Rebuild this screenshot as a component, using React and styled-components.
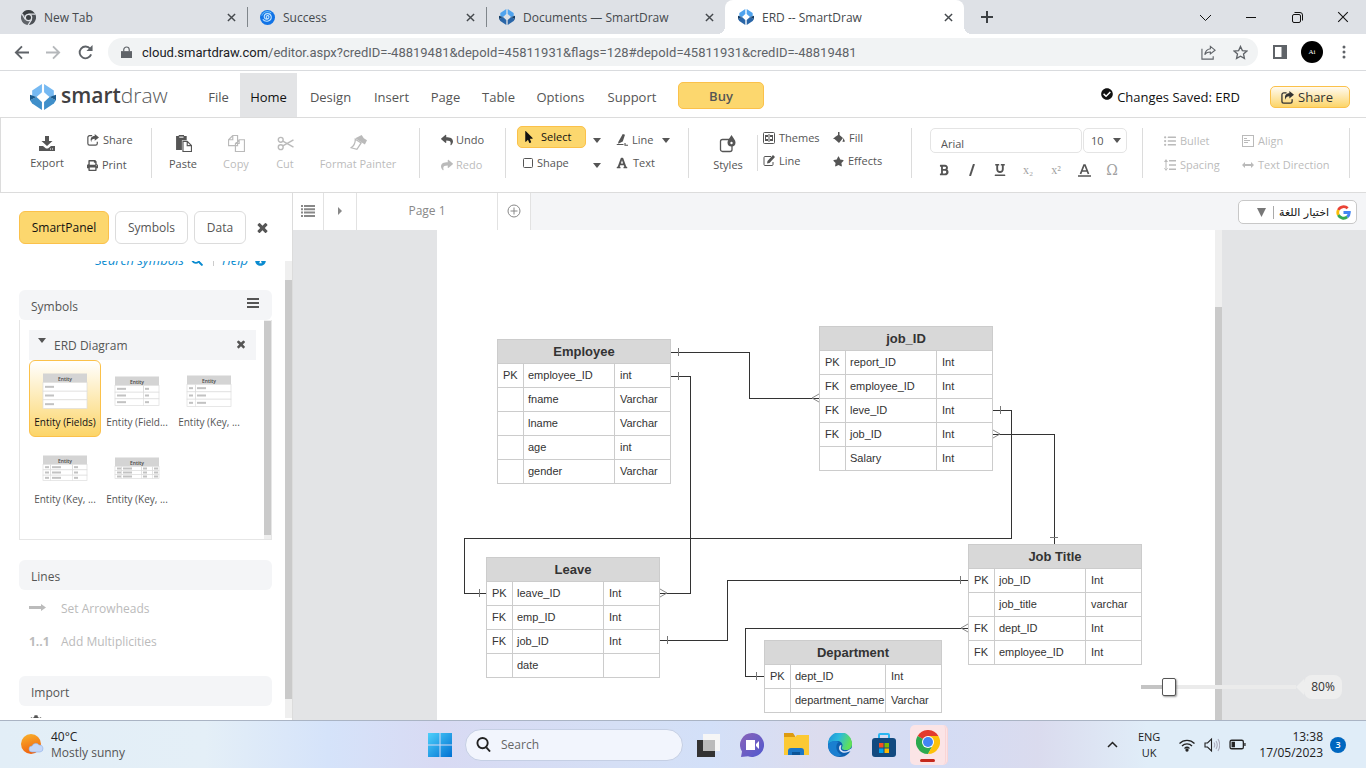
import React from "react";
import styled, { createGlobalStyle } from "styled-components";
import {
  FaReply, FaShare, FaPrint, FaStar, FaListUl, FaSearch, FaInfoCircle, FaMousePointer,
  FaFont, FaBold, FaUnderline, FaCheckCircle, FaCog,
} from "react-icons/fa";

const GlobalStyle = createGlobalStyle`
  *, *::before, *::after { box-sizing: border-box; }
  body {
    margin: 0;
    font-family: "Open Sans", "Noto Sans", sans-serif;
    font-size: 12px;
    color: #555;
    background: #fff;
    overflow: hidden;
  }
  button, input, select { font: inherit; color: inherit; }
  button { border: 0; padding: 0; margin: 0; background: none; cursor: pointer; }
  a { color: inherit; text-decoration: none; }
  svg { display: block; flex: none; }
`;

/* ---------- shell ---------- */

const Shell = styled.div`
  display: flex;
  flex-direction: column;
  height: 100vh;
`;

const Row = styled.div`
  display: flex;
  align-items: center;
  gap: ${(p) => p.$gap || 0}px;
`;

const Spacer = styled.div`
  flex: 1;
`;

/* ---------- icons ---------- */

const Svg = ({ size = 16, w, h, box = 16, children, ...rest }) => (
  <svg width={w || size} height={h || size} viewBox={`0 0 ${box} ${box}`} fill="currentColor" aria-hidden="true" {...rest}>
    {children}
  </svg>
);

const Line = ({ children, sw = 1, ...rest }) => (
  <Svg fill="none" stroke="currentColor" strokeWidth={sw} {...rest}>{children}</Svg>
);

const CrossIcon = ({ size = 10, sw = 2 }) => (
  <Line size={size} box={10} sw={sw}><path d="M1 1L9 9M9 1L1 9" /></Line>
);

const HeavyCross = ({ size }) => (
  <Svg size={size} box={1792}>
    <path d="M1490 1322q0 40-28 68l-136 136q-28 28-68 28t-68-28l-294-294-294 294q-28 28-68 28t-68-28l-136-136q-28-28-28-68t28-68l294-294-294-294q-28-28-28-68t28-68l136-136q28-28 68-28t68 28l294 294 294-294q28-28 68-28t68 28l136 136q28 28 28 68t-28 68l-294 294 294 294q28 28 28 68z" />
  </Svg>
);

const Caret = ({ w = 8, h = 5 }) => (
  <svg width={w} height={h} viewBox="0 0 8 5" preserveAspectRatio="none" fill="currentColor" aria-hidden="true"><path d="M0 0h8L4 5z" /></svg>
);

const ShareIcon = ({ size = 13 }) => (
  <Svg size={size} box={14}>
    <path d="M6 2H3a2 2 0 0 0-2 2v7a2 2 0 0 0 2 2h7a2 2 0 0 0 2-2V9" fill="none" stroke="currentColor" strokeWidth="1.4" />
    <path d="M9 0l5 4-5 4V5.600C6.500 5.600 5 6.500 5 9.500 3 5 5.500 2.400 9 2.400z" />
  </Svg>
);

const ExportIcon = () => (
  <Svg size={16}>
    <path d="M6 1h4v5h3.500L8 11 2.500 6H6zM0 11h4l3 2.500h2L12 11h4v5H0z" />
    <path d="M11 14h1M13 14h1" stroke="#fff" />
  </Svg>
);

const PasteIcon = () => (
  <Svg w={17} h={17}>
    <path d="M1 1h2.500V0h5v1H11v4H6.500v9H1z" />
    <path d="M4 2h4" stroke="#fff" />
    <path d="M7.500 6h4l4 4v5.500h-8zM11.500 6v4h4" fill="#fff" stroke="currentColor" strokeWidth="1.100" />
  </Svg>
);

const CopyIcon = () => (
  <Line w={17} h={17} sw={1.1}>
    <path d="M4.500 .5H9v9.500H.5V4.500zM4.500 .5v4h-4M10.500 4.500h5v11H7V8zM10.500 4.500V8H7" />
  </Line>
);

const CutIcon = () => (
  <Line w={17} h={17} sw={1.3}>
    <circle cx="3.500" cy="4.500" r="2.300" /><circle cx="3.500" cy="11.500" r="2.300" />
    <path d="M5.500 5.700L15.500 11.500M5.500 10.300L15.500 4.500" />
  </Line>
);

const PainterIcon = () => (
  <Svg w={17} h={17}>
    <path d="M5 3l6-3 2 3 3 2-2 4-3-2z" />
    <path d="M5 4l5.500 3.500-4 6L1 12c3-2 4-5 4-8z" fill="none" stroke="currentColor" strokeWidth="1.200" />
  </Svg>
);

const PenIcon = () => (
  <Svg size={12}>
    <path d="M9 0l3 1-3 9-6 3 0-2.500z" />
    <path d="M1 14h9M12 12v3h4" stroke="currentColor" strokeWidth="1.500" fill="none" />
  </Svg>
);

const StylesIcon = () => (
  <Svg size={18} box={18}>
    <rect x="1.500" y="4.500" width="11.500" height="12" rx="2" fill="none" stroke="currentColor" strokeWidth="1.300" />
    <path d="M12.500 0c2 3.500 4 5 4 7.500a4 4 0 0 1-8 0C8.500 5 10.500 3.500 12.500 0z" />
    <circle cx="12.500" cy="8" r="1.200" fill="#fff" />
  </Svg>
);

const ThemesIcon = () => (
  <Svg size={12} box={12}>
    <rect x=".5" y=".5" width="11" height="11" rx="1" fill="none" stroke="currentColor" />
    <path d="M2 3h3v2H3v2h2v2H2zM10 3H7v2h2v2H7v2h3zM5.500 2h1v8h-1z" />
  </Svg>
);

const FillIcon = () => (
  <Svg size={12} box={12}>
    <path d="M5 0h1.500v3L10 6 6 11 1.500 7 0 7l2-2 3-2zM10.500 6L12 9.500 9.500 10z" />
  </Svg>
);

const EditIcon = () => (
  <Svg size={12} box={12}>
    <path d="M8 1.500H2a1 1 0 0 0-1 1v7a1 1 0 0 0 1 1h7a1 1 0 0 0 1-1V7" fill="none" stroke="currentColor" />
    <path d="M10 0l2 2-5.500 6-2.500.5.5-2.500z" />
  </Svg>
);

const SpacingIcon = () => (
  <Svg size={12} box={12}>
    <path d="M2 0l2 3H0zM2 12l2-3H0zM1.500 2h1v8h-1zM5 1h7v1.500H5zM5 5.200h7v1.500H5zM5 9.500h7V11H5z" />
  </Svg>
);

const AlignIcon = () => (
  <Line size={12} box={12}><rect x=".5" y=".5" width="11" height="11" /><path d="M2 3.500h3M2 5.500h6M2 7.500h4" /></Line>
);

const DirectionIcon = () => (
  <Svg size={12} box={12}><path d="M0 6l3-3v2h6V3l3 3-3 3V7H3v2z" /></Svg>
);

const PageListIcon = () => (
  <Svg size={14} box={14}>
    <path d="M0 1h2v2H0zM3 1h11v2H3zM0 4.300h2v2H0zM3 4.300h11v2H3zM0 7.600h2v2H0zM3 7.600h11v2H3zM0 11h2v2H0zM3 11h11v2H3z" />
  </Svg>
);

const LogoMark = ({ size, a = "#76b9f2", b = "#3f8fca", c = "#1b5a8c" }) => (
  <Svg size={size} box={24}>
    <path d="M11 0L2 6v5l4 1 5-4.500z" fill={a} />
    <path d="M13 0l9 6v5l-4 1-5-4.500z" fill={a} />
    <path d="M0 15l6-3 5 4.500V24L2 18z" fill={b} />
    <path d="M24 15l-6-3-5 4.500V24l9-6z" fill={b} />
    <path d="M0 10v5l6-3zM24 10v5l-6-3z" fill={c} />
  </Svg>
);

const ChromeIcon = ({ size, mono }) => {
  const [r, y, g, m] = mono ? ["#3c4043", "#4d5156", "#5f6368", "#3c4043"] : ["#e33b2e", "#fdc10a", "#2da94f", "#4285f4"];
  return (
    <Svg size={size} box={24}>
      <path d="M12 12L1.600 6A12 12 0 0 1 22.400 6z" fill={r} />
      <path d="M12 12L1.600 6A12 12 0 0 0 12 24l5-9z" fill={g} />
      <path d="M12 12l5 3-5 9A12 12 0 0 0 22.400 6H12z" fill={y} />
      {mono && <path d="M12 6.500h11M7 15L1.500 6M17 15l-5.500 9" stroke="#dee1e6" strokeWidth="2" />}
      <circle cx="12" cy="12" r="6" fill={mono ? "#dee1e6" : "#fff"} />
      <circle cx="12" cy="12" r={mono ? 4 : 5} fill={m} />
    </Svg>
  );
};

const SwirlIcon = () => (
  <Svg size={15} box={16}>
    <circle cx="8" cy="8" r="8" fill="#1173e6" />
    <path d="M8 9a1.500 1.500 0 1 1 1.500-2C10 10 5 11 4.500 7.500 4.500 3 11 2.500 12 7c.5 5-6 6.500-9 3" stroke="#bfe3ff" strokeWidth="1.200" fill="none" />
    <path d="M2 6C3 2 8 .500 12 3" stroke="#7ed0ff" fill="none" />
  </Svg>
);

/* ---------- browser chrome ---------- */

const TabStrip = styled.div`
  display: flex;
  height: 34px;
  padding-left: 8px;
  background: #dee1e6;
  flex: none;
`;

const BrowserTab = styled.div`
  position: relative;
  display: flex;
  align-items: center;
  gap: 8px;
  flex: 0 1 239px;
  padding: 0 11px 0 13px;
  color: #45494d;
  background: ${(p) => (p.$active ? "#fff" : "transparent")};
  border-radius: 8px 8px 0 0;
  &::before, &::after {
    content: ${(p) => (p.$active ? '""' : "none")};
    position: absolute;
    bottom: 0;
    width: 8px;
    height: 8px;
  }
  &::before { left: -8px; background: radial-gradient(circle at 0 0, #dee1e6 8px, #fff 8px); }
  &::after { right: -8px; background: radial-gradient(circle at 100% 0, #dee1e6 8px, #fff 8px); }
`;

const TabTitle = styled.span`
  flex: 1;
  white-space: nowrap;
`;

const TabDivider = styled.div`
  width: 1px;
  height: 20px;
  margin: 7px -1px 0 0;
  background: #80868b;
`;

const IconButton = styled.button`
  display: flex;
  align-items: center;
  justify-content: center;
  width: ${(p) => p.$w || 32}px;
  height: ${(p) => p.$h || 28}px;
  color: ${(p) => p.$color || "inherit"};
`;

const AddressBar = styled.div`
  display: flex;
  align-items: center;
  height: 37px;
  padding: 0 6px 0 5px;
  border-bottom: 1px solid #d9dbde;
  color: #5f6368;
  flex: none;
`;

const Omnibox = styled.div`
  display: flex;
  align-items: center;
  flex: 1;
  height: 28px;
  margin: 0 6px 0 7px;
  padding: 0 2px 0 13px;
  border-radius: 14px;
  background: #f1f3f4;
`;

const Url = styled.span`
  flex: 1;
  margin-left: 10px;
  font-family: Roboto, "Open Sans", sans-serif;
  font-size: 13px;
  white-space: nowrap;
  b { font-weight: 400; color: #202124; }
`;

const Avatar = styled.span`
  display: grid;
  place-items: center;
  width: 22px;
  height: 22px;
  border-radius: 50%;
  background: #000;
  color: #fff;
  font: 7px "Liberation Serif", serif;
`;

const tabs = [
  { title: "New Tab", icon: <ChromeIcon size={15} mono /> },
  { title: "Success", icon: <SwirlIcon /> },
  { title: "Documents — SmartDraw", icon: <LogoMark size={16} a="#4fa3ee" b="#2a66a8" c="#123c66" /> },
  { title: "ERD -- SmartDraw", icon: <LogoMark size={16} a="#4fa3ee" b="#2a66a8" c="#123c66" />, active: true },
];

const Browser = () => (
  <header>
    <TabStrip>
      {tabs.map((t, i) => (
        <React.Fragment key={t.title}>
          <BrowserTab $active={t.active}>
            {t.icon}
            <TabTitle>{t.title}</TabTitle>
            <IconButton $w={10} aria-label="Close tab"><CrossIcon size={9} sw={1.6} /></IconButton>
          </BrowserTab>
          {i < 2 && <TabDivider />}
        </React.Fragment>
      ))}
      <IconButton $w={46} $h={34} $color="#3c4043" aria-label="New tab"><Line size={12} box={12} sw={2}><path d="M6 0v12M0 6h12" /></Line></IconButton>
      <Spacer />
      <Row as="nav" aria-label="Window">
        <IconButton $w={46} $color="#111" aria-label="Tab search"><Line size={11} box={11}><path d="M0 3l5.500 5.500L11 3" /></Line></IconButton>
        <IconButton $w={46} $color="#111" aria-label="Minimise"><Line size={10} box={10}><path d="M0 5.500h10" /></Line></IconButton>
        <IconButton $w={46} $color="#111" aria-label="Restore"><Line size={11} box={11}><rect x=".5" y="2.500" width="8" height="8" rx="1.500" /><path d="M2.500 .5H8a2.500 2.500 0 0 1 2.500 2.500v5.500" /></Line></IconButton>
        <IconButton $w={46} $color="#111" aria-label="Close"><CrossIcon size={12} sw={0.9} /></IconButton>
      </Row>
    </TabStrip>
    <AddressBar>
      <IconButton aria-label="Back"><Line size={15} sw={2}><path d="M16 8H2M8.500 1.500L2 8l6.500 6.500" /></Line></IconButton>
      <IconButton $color="#b5b8bb" aria-label="Forward"><Line size={15} sw={2}><path d="M0 8h14M7.500 1.500L14 8l-6.500 6.500" /></Line></IconButton>
      <IconButton aria-label="Reload"><Line size={15} sw={2}><path d="M14 10A6.300 6.300 0 1 1 13 4" /><path d="M15.500 0v6.500H9z" fill="currentColor" stroke="none" /></Line></IconButton>
      <Omnibox>
        <Svg w={11} h={13} box={12}><path d="M0 4.500h12V12H0z" /><path d="M3 5V3a3 3 0 0 1 6 0v2" fill="none" stroke="currentColor" strokeWidth="1.300" /></Svg>
        <Url><b>cloud.smartdraw.com</b>/editor.aspx?credID=-48819481&amp;depoId=45811931&amp;flags=128#depoId=45811931&amp;credID=-48819481</Url>
        <IconButton aria-label="Share page"><Line size={15} sw={1.2}><path d="M1 4v11h12v-3M10 1.500l5 4-5 4V7.500c-3 0-5 1-6 3 .5-4 2.500-6 6-6.500z" /></Line></IconButton>
        <IconButton aria-label="Bookmark"><Line size={15} sw={1.4}><path d="M8 1.500l2 4.400 4.800.5-3.600 3.200 1 4.700L8 11.900l-4.200 2.400 1-4.700L1.200 6.400 6 5.900z" /></Line></IconButton>
      </Omnibox>
      <IconButton aria-label="Side panel"><Svg size={14} box={14}><path d="M0 0h14v14H0zM2 2v10h6.500V2z" fillRule="evenodd" /></Svg></IconButton>
      <IconButton aria-label="Profile"><Avatar>Ai</Avatar></IconButton>
      <IconButton aria-label="More"><Svg size={14} box={14}><circle cx="7" cy="2" r="1.500" /><circle cx="7" cy="7" r="1.500" /><circle cx="7" cy="12" r="1.500" /></Svg></IconButton>
    </AddressBar>
  </header>
);

/* ---------- application menu ---------- */

const MenuBar = styled.header`
  display: flex;
  align-items: flex-end;
  height: 47px;
  padding: 0 16px 0 30px;
  border-bottom: 1px solid #dcdcdc;
  font-size: 13px;
  flex: none;
`;

const Brand = styled.a`
  display: flex;
  align-items: center;
  gap: 5px;
  width: 167px;
  height: 44px;
  padding-top: 4px;
  font-size: 21px;
  font-weight: 300;
  line-height: 28px;
  color: #58595b;
  span { padding-bottom: 5px; }
  b { font-weight: 600; color: #414042; }
`;

const MenuItem = styled.button`
  height: 44px;
  width: ${(p) => p.$w}px;
  padding-top: 3px;
  color: ${(p) => (p.$active ? "#111" : "#555")};
  background: ${(p) => (p.$active ? "#e3e4e6" : "none")};
`;

const BuyButton = styled.button`
  width: 86px;
  height: 27px;
  margin: 0 0 8px 10px;
  border: 1px solid #fbc14a;
  border-radius: 5px;
  background: #fcd76e;
  font-weight: 600;
`;

const SavedNote = styled.div`
  display: flex;
  gap: 4px;
  height: 33px;
  margin-right: 30px;
  line-height: 26px;
  color: #111;
  svg { margin-top: 4px; }
`;

const ShareButton = styled.button`
  display: flex;
  align-items: center;
  justify-content: center;
  gap: 4px;
  width: 80px;
  height: 22px;
  margin-bottom: 9px;
  padding-right: 6px;
  border: 1px solid #fbc14a;
  border-radius: 5px;
  background: linear-gradient(#fffaf0, #fcd569);
  color: #333;
`;

const menu = [["File", 43], ["Home", 57], ["Design", 67], ["Insert", 55], ["Page", 53], ["Table", 53], ["Options", 71], ["Support", 72]];

const Menu = () => (
  <MenuBar>
    <Brand href="#home"><LogoMark size={26} /><span><b>smart</b>draw</span></Brand>
    {menu.map(([name, w]) => <MenuItem key={name} $w={w} $active={name === "Home"}>{name}</MenuItem>)}
    <BuyButton>Buy</BuyButton>
    <Spacer />
    <SavedNote><FaCheckCircle size={12} />Changes Saved: ERD</SavedNote>
    <ShareButton><ShareIcon size={13} />Share</ShareButton>
  </MenuBar>
);

/* ---------- ribbon ---------- */

const Ribbon = styled.div`
  display: flex;
  height: 75px;
  padding-top: 10px;
  border-bottom: 1px solid #dcdcdc;
  border-left: 1px solid #dcdcdc;
  font-size: 11px;
  line-height: 16px;
  flex: none;
`;

const Group = styled.div`
  display: flex;
  width: ${(p) => p.$w}px;
  height: 50px;
  padding-left: ${(p) => p.$pad}px;
  border-right: 1px solid #dcdcdc;
  flex: none;
`;

const BigTool = styled.button`
  display: flex;
  flex-direction: column;
  align-items: center;
  gap: 4px;
  width: ${(p) => p.$w}px;
  padding-top: 7px;
  white-space: nowrap;
  opacity: ${(p) => (p.disabled ? 0.4 : 1)};
`;

const Stack = styled.div`
  display: flex;
  flex-direction: column;
  gap: ${(p) => p.$gap}px;
  width: ${(p) => p.$w}px;
  padding-top: 4px;
  padding-left: ${(p) => p.$left || 0}px;
  flex: none;
`;

const Tool = styled.button`
  display: flex;
  align-items: center;
  gap: ${(p) => p.$gap || 4}px;
  height: 16px;
  padding-left: ${(p) => p.$pad || 0}px;
  white-space: nowrap;
  opacity: ${(p) => (p.disabled ? 0.4 : 1)};
`;

const SelectTool = styled.button`
  display: flex;
  align-items: center;
  gap: 6px;
  width: 69px;
  height: 22px;
  margin-top: -6px;
  padding-left: 5px;
  border: 1px solid #fbc14a;
  border-radius: 5px;
  background: #fcd76e;
  color: #111;
`;

const CaretButton = styled.button`
  display: grid;
  place-items: center;
  width: 22px;
  height: 16px;
`;

const StyleTools = styled.div`
  display: grid;
  grid-template-columns: 70px 60px;
  row-gap: 7px;
  align-content: start;
  height: 36px;
  margin-top: 7px;
  padding-left: 5px;
  border-left: 1px solid #dcdcdc;
  button { margin-top: -5px; margin-bottom: 5px; }
`;

const FontField = styled.input`
  width: 152px;
  height: 25px;
  padding: 5px 10px 0;
  border: 1px solid #e4e4e4;
  border-radius: 5px;
`;

const SizeField = styled.label`
  display: flex;
  align-items: center;
  width: 44px;
  height: 25px;
  padding: 0 5px 0 7px;
  border: 1px solid #e4e4e4;
  border-radius: 5px;
  select { appearance: none; flex: 1; min-width: 0; border: 0; padding: 0; background: none; }
`;

const FontTools = styled.div`
  display: flex;
  flex-direction: column;
  gap: 8px;
`;

const Glyph = styled.button`
  display: grid;
  place-items: center;
  width: 28px;
  height: 18px;
  font: ${(p) => p.$font || '13px "Liberation Sans", sans-serif'};
  opacity: ${(p) => (p.$dim ? 0.55 : 1)};
`;

const TextTools = styled.div`
  display: grid;
  grid-template-columns: 78px 100px;
  row-gap: 8px;
  align-content: start;
  padding-top: 5px;
`;

const RibbonBar = () => (
  <Ribbon>
    <Group $w={151} $pad={22}>
      <BigTool $w={48}><ExportIcon />Export</BigTool>
      <Stack $gap={9} $w={74} $left={16}>
        <Tool $gap={4}><ShareIcon size={12} />Share</Tool>
        <Tool $gap={4}><FaPrint size={11} />Print</Tool>
      </Stack>
    </Group>
    <Group $w={268} $pad={6}>
      <BigTool $w={50}><PasteIcon />Paste</BigTool>
      <BigTool $w={56} disabled><CopyIcon />Copy</BigTool>
      <BigTool $w={42} disabled><CutIcon />Cut</BigTool>
      <BigTool $w={104} disabled><PainterIcon />Format Painter</BigTool>
    </Group>
    <Group $w={86} $pad={21}>
      <Stack $gap={9} $w={60}>
        <Tool $gap={3}><FaReply size={12} />Undo</Tool>
        <Tool $gap={3} disabled><FaShare size={12} />Redo</Tool>
      </Stack>
    </Group>
    <Group $w={183} $pad={11}>
      <Stack $gap={7} $w={69}>
        <SelectTool><FaMousePointer size={12} />Select</SelectTool>
        <Tool $gap={4} $pad={6}><Line size={10} box={10}><rect x=".5" y=".5" width="9" height="9" rx="1" /></Line>Shape</Tool>
      </Stack>
      <Stack $gap={9} $w={30}>
        <CaretButton aria-label="Select options"><Caret /></CaretButton>
        <CaretButton aria-label="Shape options"><Caret /></CaretButton>
      </Stack>
      <Stack $gap={7} $w={39}>
        <Tool $gap={4}><PenIcon />Line</Tool>
        <Tool $gap={5}><FaFont size={12} />Text</Tool>
      </Stack>
      <Stack $w={22}><CaretButton aria-label="Line options"><Caret /></CaretButton></Stack>
    </Group>
    <Group $w={223} $pad={10}>
      <BigTool $w={58}><StylesIcon />Styles</BigTool>
      <StyleTools>
        <Tool><ThemesIcon />Themes</Tool>
        <Tool><FillIcon />Fill</Tool>
        <Tool><EditIcon />Line</Tool>
        <Tool><FaStar size={11} />Effects</Tool>
      </StyleTools>
    </Group>
    <Group $w={231} $pad={18}>
      <FontTools>
        <Row $gap={1}>
          <FontField defaultValue="Arial" aria-label="Font" />
          <SizeField><select aria-label="Font size" defaultValue="10"><option>10</option></select><Caret /></SizeField>
        </Row>
        <Row>
          <Glyph aria-label="Bold"><FaBold size={12} /></Glyph>
          <Glyph aria-label="Italic"><Line size={12} box={12} sw={2}><path d="M8 0L4 12" /></Line></Glyph>
          <Glyph aria-label="Underline"><FaUnderline size={12} /></Glyph>
          <Glyph $dim aria-label="Subscript" $font='12px "Liberation Serif", serif'>x₂</Glyph>
          <Glyph $dim aria-label="Superscript" $font='12px "Liberation Serif", serif'>x²</Glyph>
          <Glyph aria-label="Text colour"><Line size={13} box={13} sw={1.7}><path d="M2.500 10L6 1h1l3.500 9M4 7h5M0 12h13" /></Line></Glyph>
          <Glyph $dim aria-label="Symbol" $font='14px "DejaVu Serif", serif'>Ω</Glyph>
        </Row>
      </FontTools>
    </Group>
    <Group $w={207} $pad={21}>
      <TextTools>
        <Tool $gap={4} disabled><FaListUl size={12} />Bullet</Tool>
        <Tool $gap={4} disabled><AlignIcon />Align</Tool>
        <Tool $gap={4} disabled><SpacingIcon />Spacing</Tool>
        <Tool $gap={4} disabled><DirectionIcon />Text Direction</Tool>
      </TextTools>
    </Group>
  </Ribbon>
);

/* ---------- smart panel ---------- */

const Body = styled.div`
  display: flex;
  flex: 1;
  min-height: 0;
`;

const Side = styled.aside`
  display: flex;
  flex-direction: column;
  width: 293px;
  border-right: 1px solid #dcdcdc;
  flex: none;
`;

const PanelTabs = styled.div`
  display: flex;
  align-items: center;
  gap: 6px;
  height: 68px;
  padding-left: 19px;
  flex: none;
`;

const PanelTab = styled.button`
  height: 33px;
  width: ${(p) => p.$w}px;
  border: 1px solid ${(p) => (p.$active ? "#fbc14a" : "#dcdcdc")};
  border-radius: 6px;
  background: ${(p) => (p.$active ? "#fcd76e" : "#fff")};
  color: ${(p) => (p.$active ? "#111" : "#555")};
`;

const PanelScroll = styled.div`
  display: flex;
  flex: 1;
  min-height: 0;
  margin-bottom: 2px;
  overflow: hidden;
`;

const PanelContent = styled.div`
  flex: 1;
  height: fit-content;
  margin-top: -11px;
  padding: 0 13px 0 19px;
`;

const ScrollTrack = styled.div`
  display: flex;
  width: 7px;
  padding: ${(p) => p.$pad || "0"};
  background: #efefef;
  &::before { content: ""; flex: 1; background: #cacaca; }
`;

const SearchLine = styled.div`
  display: flex;
  align-items: center;
  justify-content: flex-end;
  gap: 7px;
  height: 20px;
  margin-bottom: 20px;
  padding-right: 6px;
  font-size: 13px;
  font-style: italic;
  color: #0a8bd0;
  i { width: 1px; height: 12px; margin: 0 1px 0 3px; background: #ccc; }
`;

const SectionHead = styled.h2`
  display: flex;
  justify-content: space-between;
  height: 30px;
  margin: 0;
  padding: 9px 12px 0;
  border-radius: 6px;
  background: #f4f5f7;
  font-size: 12px;
  font-weight: 400;
  line-height: 16px;
  svg { margin-top: -3px; }
`;

const Library = styled.div`
  display: flex;
  height: 220px;
  margin-bottom: 20px;
  border: 1px solid #e6e6e6;
  border-top: 0;
`;

const LibraryBody = styled.div`
  flex: 1;
  padding: 10px 8px 0 9px;
`;

const LibraryHead = styled.h3`
  display: flex;
  height: 30px;
  margin: 0;
  padding: 8px 9px 0 9px;
  background: #f4f5f7;
  font-size: 12px;
  font-weight: 400;
  line-height: 16px;
  span { flex: 1; padding-left: 8px; }
`;

const SymbolGrid = styled.div`
  display: grid;
  grid-template-columns: repeat(3, 72px);
`;

const SymbolTile = styled.button`
  display: flex;
  flex-direction: column;
  align-items: center;
  height: 77px;
  border: 1px solid ${(p) => (p.$active ? "#fbc14a" : "transparent")};
  border-radius: 6px;
  background: ${(p) => (p.$active ? "linear-gradient(#fff, #fcd569)" : "none")};
  font-size: 10px;
  line-height: 14px;
  color: ${(p) => (p.$active ? "#111" : "#555")};
  svg { margin: 10px 0 4px; }
`;

const LineAction = styled.button`
  display: flex;
  align-items: center;
  height: ${(p) => p.$h || 33}px;
  padding: 4px 10px 0;
  color: ${(p) => (p.disabled ? "#bbb" : "inherit")};
  b { width: 32px; text-align: left; }
`;

const SectionGap = styled.div`
  height: 20px;
`;

const Thumb = ({ cols, h }) => {
  const top = (40 - h) / 2;
  const row = (h - 9) / 3;
  return (
    <svg width="46" height="40" viewBox="0 0 46 40" aria-hidden="true">
      <rect x="1" y={top} width="44" height="9" fill="#d4d4d4" />
      <text x="23" y={top + 7} textAnchor="middle" fontSize="5" fontWeight="600" fill="#444">Entity</text>
      {[0, 1, 2].map((i) => (
        <g key={i}>
          <rect x="1" y={top + 9 + i * row} width="44" height={row} fill="#fff" stroke="#ddd" strokeWidth=".7" />
          {cols.map((x, j) => <rect key={x} x={x + 2} y={top + 8 + (i + 0.5) * row} width={j === (cols.length > 1 && cols[1] < 20 ? 1 : 0) ? 9 : 4} height="2" fill="#c2c2c2" />)}
          {cols.slice(1).map((x) => <rect key={x} x={x} y={top + 9} width=".6" height={h - 9} fill="#ddd" />)}
        </g>
      ))}
    </svg>
  );
};

const symbols = [
  ["Entity (Fields)", [1], 35],
  ["Entity (Field...", [1, 29], 29],
  ["Entity (Key, ...", [1, 9], 31],
  ["Entity (Key, ...", [1, 8, 30], 25],
  ["Entity (Key, ...", [1, 7, 27, 38], 21],
];

const SmartPanel = () => (
  <Side>
    <PanelTabs>
      <PanelTab $active $w={90}>SmartPanel</PanelTab>
      <PanelTab $w={73}>Symbols</PanelTab>
      <PanelTab $w={52}>Data</PanelTab>
      <IconButton $w={20} aria-label="Close panel"><HeavyCross size={15} /></IconButton>
    </PanelTabs>
    <PanelScroll>
      <PanelContent>
        <SearchLine>
          <a href="#search">Search symbols</a><FaSearch size={12} /><i /><a href="#help">Help</a><FaInfoCircle size={11} />
        </SearchLine>
        <SectionHead>
          Symbols
          <Svg size={14} box={14}><path d="M1 2h12v2H1zM1 6h12v2H1zM1 10h12v2H1z" /></Svg>
        </SectionHead>
        <Library>
          <LibraryBody>
            <LibraryHead><Caret /><span>ERD Diagram</span><HeavyCross size={12} /></LibraryHead>
            <SymbolGrid>
              {symbols.map(([name, cols, h], i) => (
                <SymbolTile key={i} $active={i === 0}><Thumb cols={cols} h={h} />{name}</SymbolTile>
              ))}
            </SymbolGrid>
          </LibraryBody>
          <ScrollTrack $pad="1px 0 4px" />
        </Library>
        <SectionHead>Lines</SectionHead>
        <LineAction disabled><b><Svg size={17} box={17}><path d="M0 6h12V4l5 3.500-5 3.500V9H0z" /></Svg></b>Set Arrowheads</LineAction>
        <LineAction disabled><b>1..1</b>Add Multiplicities</LineAction>
        <SectionGap />
        <SectionHead>Import</SectionHead>
        <LineAction $h={28}><FaCog size={14} /></LineAction>
      </PanelContent>
      <ScrollTrack $pad="19px 0 19px" />
    </PanelScroll>
  </Side>
);

/* ---------- work area ---------- */

const Work = styled.main`
  position: relative;
  display: flex;
  flex-direction: column;
  flex: 1;
  min-width: 0;
  background: #e3e4e6;
`;

const PageStrip = styled.div`
  display: flex;
  height: 37px;
  padding-right: 9px;
  background: #f4f5f7;
  color: #888;
  flex: none;
`;

const PageCell = styled.button`
  display: grid;
  place-items: center;
  width: ${(p) => p.$w}px;
  padding-bottom: 2px;
  border-right: 1px solid #e2e2e2;
  background: #fff;
  color: #888;
`;

const Language = styled.a`
  display: flex;
  align-items: center;
  gap: 7px;
  width: 119px;
  height: 24px;
  margin-top: 7px;
  padding: 0 5px;
  border: 1px solid #c8c8c8;
  border-radius: 5px;
  background: #fff;
  color: #777;
  font: 11px "DejaVu Sans", sans-serif;
  direction: rtl;
  span { padding-left: 5px; border-left: 1px solid #aaa; color: #111; white-space: nowrap; }
`;

const Viewport = styled.div`
  display: flex;
  flex: 1;
  min-height: 0;
  padding: 0 144px;
`;

const Sheet = styled.div`
  position: relative;
  flex: 1;
  overflow: hidden;
  background: #fff;
`;

const Wires = styled.svg`
  position: absolute;
  inset: 0;
  width: 100%;
  height: 100%;
`;

const EntityTable = styled.table`
  position: absolute;
  left: ${(p) => p.$x}px;
  top: ${(p) => p.$y}px;
  width: ${(p) => p.$w}px;
  table-layout: fixed;
  border-collapse: collapse;
  background: #fff;
  font-family: "Liberation Sans", Arial, sans-serif;
  font-size: 11px;
  color: #333;
  th, td { height: 24px; border: 1px solid #ccc; line-height: 16px; white-space: nowrap; }
  th { padding: 0; background: #d8d8d8; font-size: 13px; }
  td { padding: 0 0 2px 5px; text-align: left; }
  td:nth-child(2) { padding-left: 4px; }
`;

const entities = [
  { name: "Employee", x: 60, y: 109, w: 174, rows: [["PK", "employee_ID", "int"], ["", "fname", "Varchar"], ["", "lname", "Varchar"], ["", "age", "int"], ["", "gender", "Varchar"]] },
  { name: "job_ID", x: 382, y: 96, w: 174, rows: [["PK", "report_ID", "Int"], ["FK", "employee_ID", "Int"], ["FK", "leve_ID", "Int"], ["FK", "job_ID", "Int"], ["", "Salary", "Int"]] },
  { name: "Leave", x: 49, y: 327, w: 174, rows: [["PK", "leave_ID", "Int"], ["FK", "emp_ID", "Int"], ["FK", "job_ID", "Int"], ["", "date", ""]] },
  { name: "Job Title", x: 531, y: 314, w: 174, rows: [["PK", "job_ID", "Int"], ["", "job_title", "varchar"], ["FK", "dept_ID", "Int"], ["FK", "employee_ID", "Int"]] },
  { name: "Department", x: 327, y: 410, w: 178, rows: [["PK", "dept_ID", "Int"], ["", "department_name", "Varchar"]] },
];

const Entity = ({ name, x, y, w, rows }) => (
  <EntityTable $x={x} $y={y} $w={w}>
    <colgroup><col width="26" /><col /><col width="56" /></colgroup>
    <thead><tr><th colSpan={3}>{name}</th></tr></thead>
    <tbody>
      {rows.map((r, i) => <tr key={i}>{r.map((c, j) => <td key={j}>{c}</td>)}</tr>)}
    </tbody>
  </EntityTable>
);

const Zoom = styled.div`
  position: absolute;
  right: 24px;
  bottom: 21px;
  display: flex;
  align-items: center;
`;

const ZoomRange = styled.input`
  appearance: none;
  width: 155px;
  height: 20px;
  margin: 0;
  background: linear-gradient(90deg, #c4c4c4 24px, #ebebeb 24px) center / 100% 4px no-repeat;
  border-radius: 2px;
  &::-webkit-slider-thumb {
    appearance: none;
    width: 14px;
    height: 18px;
    border: 1px solid #555;
    border-radius: 2px;
    background: #fff;
    box-shadow: 1px 1px 2px rgba(0, 0, 0, 0.4);
  }
`;

const ZoomValue = styled.output`
  display: flex;
  align-items: center;
  &::before {
    content: "";
    border: 8px solid transparent;
    border-right-color: #eee;
    border-left: 0;
  }
  span {
    width: 38px;
    height: 24px;
    border-radius: 8px;
    background: #eee;
    line-height: 24px;
    text-align: center;
    color: #333;
  }
`;

const GoogleG = () => (
  <Line size={15} box={18} sw={3.4}>
    <path d="M2.800 6A7 7 0 0 1 14 4" stroke="#ea4335" />
    <path d="M2.800 12A7 7 0 0 1 2.800 6" stroke="#fbbc05" />
    <path d="M2.800 12A7 7 0 0 0 13.500 14.300" stroke="#34a853" />
    <path d="M9 9h7A7 7 0 0 1 13.500 14.300" stroke="#4285f4" />
  </Line>
);

const Workspace = () => (
  <Work>
    <PageStrip>
      <PageCell $w={31} aria-label="Page list"><PageListIcon /></PageCell>
      <PageCell $w={33} aria-label="Next"><Svg size={10} box={10}><path d="M3 1l4 4-4 4z" /></Svg></PageCell>
      <PageCell $w={141}>Page 1</PageCell>
      <PageCell $w={33} aria-label="Add page"><Line size={14} box={14}><circle cx="7" cy="7" r="6" /><path d="M7 3.500v7M3.500 7h7" /></Line></PageCell>
      <Spacer />
      <Language href="#language"><GoogleG /><span>اختيار اللغة</span><Caret w={9} h={9} /></Language>
    </PageStrip>
    <Viewport>
      <Sheet>
        <Wires fill="none" stroke="#333" shapeRendering="crispEdges" aria-hidden="true">
          <path d="M233 122H312V168H382M233 146H253V363H223M555 180H574V308H27V363H49M555 204H617V314M223 410H290V350H531M327 446H308V398H531" />
          <path stroke="#777" d="M241 118v8M241 142v8M563 176v8M42 359v8M613 307h8M230 406v8M523 346v8M319 442v8" />
          <path stroke="#888" shapeRendering="auto" d="M382 164L375 168L382 172M223 359L230 363L223 367M556 200L563 204L556 208M531 394L524 398L531 402" />
        </Wires>
        {entities.map((e) => <Entity key={e.name} {...e} />)}
      </Sheet>
      <ScrollTrack $pad="77px 0 0" />
    </Viewport>
    <Zoom>
      <ZoomRange type="range" min="30" max="360" defaultValue="80" aria-label="Zoom" />
      <ZoomValue><span>80%</span></ZoomValue>
    </Zoom>
  </Work>
);

/* ---------- taskbar ---------- */

const Taskbar = styled.footer`
  display: grid;
  grid-template-columns: 1fr auto 1fr;
  align-items: center;
  height: 48px;
  padding: 0 20px;
  border-top: 1px solid #aab4c4;
  background: linear-gradient(90deg, #e2eef7 0, #e4eff7 15%, #d5e3fa 24%, #d8daf3 32%, #d5dff5 45%, #d3e0f8 52%, #dcdcee 60%, #d3dcf5 68%, #dadbee 76%, #e0edf8 84%);
  color: #222;
  line-height: 16px;
  flex: none;
`;

const Weather = styled.button`
  display: flex;
  align-items: center;
  gap: 7px;
  text-align: left;
  color: #222;
  span { color: #555; }
`;

const Dock = styled.div`
  display: flex;
  align-items: center;
  padding-left: 10px;
`;

const DockButton = styled.button`
  display: grid;
  place-items: center;
  width: 44px;
  height: 40px;
`;

const ActiveApp = styled(DockButton)`
  width: 38px;
  margin-left: 4px;
  padding-top: 3px;
  border-right: 3px double #f9d5d6;
  border-radius: 5px;
  background: #fbe4e6;
  &::after { content: ""; width: 15px; height: 3px; border-radius: 2px; background: #c5281c; }
`;

const SearchBox = styled.label`
  display: flex;
  align-items: center;
  gap: 10px;
  width: 218px;
  height: 32px;
  margin: 0 3px 0 13px;
  padding-left: 10px;
  border: 1px solid #c5cfe4;
  border-radius: 16px;
  background: #f2f5fd;
  input { width: 150px; border: 0; padding: 0; background: none; outline: 0; }
  input::placeholder { color: #666; opacity: 1; }
`;

const Tray = styled.div`
  display: flex;
  align-items: center;
  justify-content: flex-end;
  gap: 9px;
`;

const TrayText = styled.div`
  margin: ${(p) => p.$m};
  font-size: ${(p) => p.$size}px;
  text-align: ${(p) => p.$align};
  white-space: nowrap;
`;

const Badge = styled.span`
  display: grid;
  place-items: center;
  width: 16px;
  height: 16px;
  border-radius: 50%;
  background: #0067c0;
  color: #fff;
  font-size: 9px;
  font-weight: 600;
`;

const WindowsBar = () => (
  <Taskbar>
    <Weather>
      <svg width="24" height="22" viewBox="0 0 24 22" aria-hidden="true">
        <defs><linearGradient id="sun" x2="0.3" y2="1"><stop stopColor="#f9b52e" /><stop offset="1" stopColor="#f0640f" /></linearGradient></defs>
        <circle cx="11" cy="10" r="10" fill="url(#sun)" />
        <path d="M12 18a3 3 0 0 1 0-6 4 4 0 0 1 7-1 3.500 3.500 0 0 1 1 7z" fill="#c5d7f7" stroke="#8fb0ea" strokeWidth=".6" />
      </svg>
      <div>40°C<br /><span>Mostly sunny</span></div>
    </Weather>
    <Dock>
      <IconButton $w={24} aria-label="Start">
        <Svg size={24} box={24}>
          <defs><linearGradient id="win" x2="1" y2="1"><stop stopColor="#4dd0fb" /><stop offset="1" stopColor="#0070d2" /></linearGradient></defs>
          <path d="M0 0h11.500v11.500H0zM12.500 0H24v11.500H12.500zM0 12.500h11.500V24H0zM12.500 12.500H24V24H12.500z" fill="url(#win)" />
        </Svg>
      </IconButton>
      <SearchBox>
        <Line size={15} sw={2}><circle cx="7" cy="6.500" r="5.500" /><path d="M11 11l4 4.500" /></Line>
        <input type="text" placeholder="Search" aria-label="Search" />
      </SearchBox>
      <DockButton aria-label="Task view">
        <Svg size={24} box={24}><path d="M1 7h18v17H1z" fill="#333" /><path d="M7 1h17v17H7z" fill="#f6f6f6" /><path d="M7 7h12v11H7z" fill="#bbb" /></Svg>
      </DockButton>
      <DockButton aria-label="Chat">
        <Svg size={24} box={24}>
          <defs><linearGradient id="chat" x2="1" y2="1"><stop stopColor="#8a63b8" /><stop offset="1" stopColor="#5059cf" /></linearGradient></defs>
          <path d="M12 0a12 12 0 1 1-4 23.300L1 24l1-5.500A12 12 0 0 1 12 0z" fill="url(#chat)" />
          <path d="M6 7h9v10H6zM16 11l3-3v8l-3-3z" fill="#fff" />
        </Svg>
      </DockButton>
      <DockButton aria-label="Explorer">
        <Svg size={25} box={25}>
          <path d="M0 1h9l2 3v4H0z" fill="#dd9b10" /><path d="M0 5h11l2-2h12v20H0z" fill="#fcc934" />
          <path d="M4 23v-4q0-3 3-3h10q3 0 3 3v4z" fill="#1b76c6" /><path d="M8 20h8v3H8z" fill="#0b5497" />
        </Svg>
      </DockButton>
      <DockButton aria-label="Edge">
        <Svg size={24} box={24}>
          <defs><linearGradient id="edge" x2="1" y2="0.3"><stop stopColor="#1c8fd6" /><stop offset=".5" stopColor="#2bb9dd" /><stop offset="1" stopColor="#5fe05a" /></linearGradient></defs>
          <circle cx="12" cy="12" r="12" fill="#0d5fae" />
          <path d="M0 11A12 12 0 0 1 24 11c0 4-3 6-6 6s-5-1-4-3c1-1 1-5-4-6-5 0-8 1-10 3z" fill="url(#edge)" />
          <path d="M13 14c-1 3 2 5 6 4l5-3-1 3-3 1c-4 2-9 0-9-4 0-2 1-3 2-3 1 1 0 1 0 2z" fill="#d6e0f7" />
          <path d="M0 12c2-4 7-5 11-3-4 2-4 10 3 13-8 4-14-3-14-10z" fill="#1a7fd0" />
        </Svg>
      </DockButton>
      <DockButton aria-label="Store">
        <Svg size={24} box={24}>
          <path d="M7 6V2q0-1 1-1h8q1 0 1 1v4" fill="none" stroke="#29b6f2" strokeWidth="2" />
          <rect x="0" y="5" width="24" height="19" rx="3" fill="#124a80" />
          <path d="M7 10h4.500v4.500H7z" fill="#f25022" /><path d="M12.500 10H17v4.500h-4.500z" fill="#7fba00" />
          <path d="M7 15.500h4.500V20H7z" fill="#00a4ef" /><path d="M12.500 15.500H17V20h-4.500z" fill="#ffb900" />
        </Svg>
      </DockButton>
      <ActiveApp aria-label="Chrome"><ChromeIcon size={24} /></ActiveApp>
    </Dock>
    <Tray>
      <Line size={11} box={11} sw={1.5}><path d="M1 8l4.500-4.500L10 8" /></Line>
      <TrayText $align="center" $size={11} $m="0 10px 0 11px">ENG<br />UK</TrayText>
      <Line size={16} sw={1.3}><path d="M.5 6.500a10.500 10.500 0 0 1 15 0M3 9a7 7 0 0 1 10 0M5.500 11.500a3.600 3.600 0 0 1 5 0" /><circle cx="8" cy="13" r="1" fill="currentColor" /></Line>
      <Line size={16} sw={1.1}><path d="M1 6h2.500L7.500 2v12L3.500 10H1z" /><path d="M10 5.500q1.500 2.500 0 5M12 4q2.500 4 0 8M14 2q3.500 6 0 12" stroke="#aab" /></Line>
      <Line w={17} h={17} sw={1.2}><rect x="1" y="4" width="12.500" height="8" rx="1.500" /><path d="M3 6h2v4H3z" fill="currentColor" /><path d="M15 6.500v3" /></Line>
      <TrayText $align="right" $size={12} $m="0 -2px 0 4px">13:38<br />17/05/2023</TrayText>
      <Badge>3</Badge>
    </Tray>
  </Taskbar>
);

export default function App() {
  return (
    <>
      <GlobalStyle />
      <Shell>
        <Browser />
        <Menu />
        <RibbonBar />
        <Body>
          <SmartPanel />
          <Workspace />
        </Body>
        <WindowsBar />
      </Shell>
    </>
  );
}
